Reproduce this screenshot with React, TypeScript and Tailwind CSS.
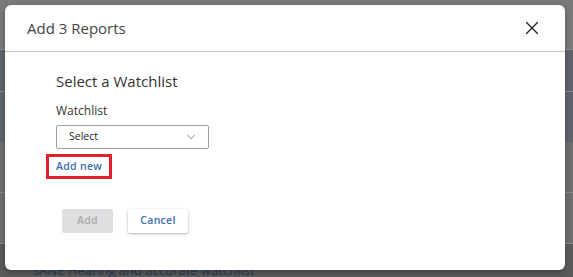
import { X, ChevronDown } from "lucide-react";

const font = { fontFamily: '"Open Sans", "Noto Sans", sans-serif' };

const rowClasses = "border-b border-[#8a8d90]";

const Backdrop = () => {
  return (
    <div className="absolute inset-0 flex flex-col bg-[#6f6f6f]">
      <div className="h-[52px] bg-[#7a7a7a] border-b border-[#8c8c8c]" />
      <div className={`h-[43px] bg-[#5f656b] ${rowClasses}`} />
      <div className="h-[52px] bg-[#5f656b]" />
      <div className={`h-[52px] ${rowClasses}`} />
      <div className={`h-[53px] ${rowClasses}`} />
      <div className="flex-1 bg-[#5b5b5b] pl-[32px] text-[13px] text-[#223a5e] leading-[14px]">
        <div className="pt-[19px]">SANE Hearing and accurate watchlist</div>
      </div>
    </div>
  );
};

const AddReportsModal = () => {
  return (
    <div
      className="absolute left-[5px] top-[5px] w-[560px] h-[265px] bg-white rounded-[6px] flex flex-col shadow-[0_2px_6px_rgba(0,0,0,0.3)]"
      style={font}
    >
      <div className="h-[47px] flex items-center justify-between pl-[22px] pr-[22px] border-b border-[#c8c8c8]">
        <span className="text-[15px] text-[#444]">Add 3 Reports</span>
        <X size={22} strokeWidth={1.4} className="text-[#222]" />
      </div>
      <div className="flex flex-col pl-[51px] pt-[19px]">
        <h2 className="text-[15px] font-normal text-[#333] leading-[20px]">
          Select a Watchlist
        </h2>
        <label className="mt-[12px] text-[12px] text-[#333] leading-[16px]">
          Watchlist
        </label>
        <button className="mt-[6px] w-[153px] h-[24px] border border-[#a0a0a0] rounded-[2px] flex items-center justify-between pl-[12px] pr-[10px] text-[10.5px] text-[#222]">
          <span>Select</span>
          <ChevronDown size={14} strokeWidth={1.2} className="text-[#555]" />
        </button>
        <div className="mt-[5px] -ml-[10px] w-[66px] h-[25px] border-[3px] border-[#e0202a] flex items-center pl-[7px]">
          <span className="text-[10.5px] font-semibold text-[#3b6db4] tracking-[0.3px]">
            Add new
          </span>
        </div>
        <div className="mt-[30px] ml-[6px] flex gap-[15px]">
          <button className="w-[51px] h-[24px] rounded-[2px] bg-[#dfdfdf] text-[10.5px] font-semibold text-[#a9a9a9] tracking-[0.3px]">
            Add
          </button>
          <button className="w-[60px] h-[24px] rounded-[2px] bg-white shadow-[0_1px_3px_rgba(0,0,0,0.3)] text-[10.5px] font-semibold text-[#3b6db4] tracking-[0.3px]">
            Cancel
          </button>
        </div>
      </div>
    </div>
  );
};

export default function App() {
  return (
    <div className="relative w-[573px] h-[277px] overflow-hidden" style={font}>
      <Backdrop />
      <AddReportsModal />
    </div>
  );
}
